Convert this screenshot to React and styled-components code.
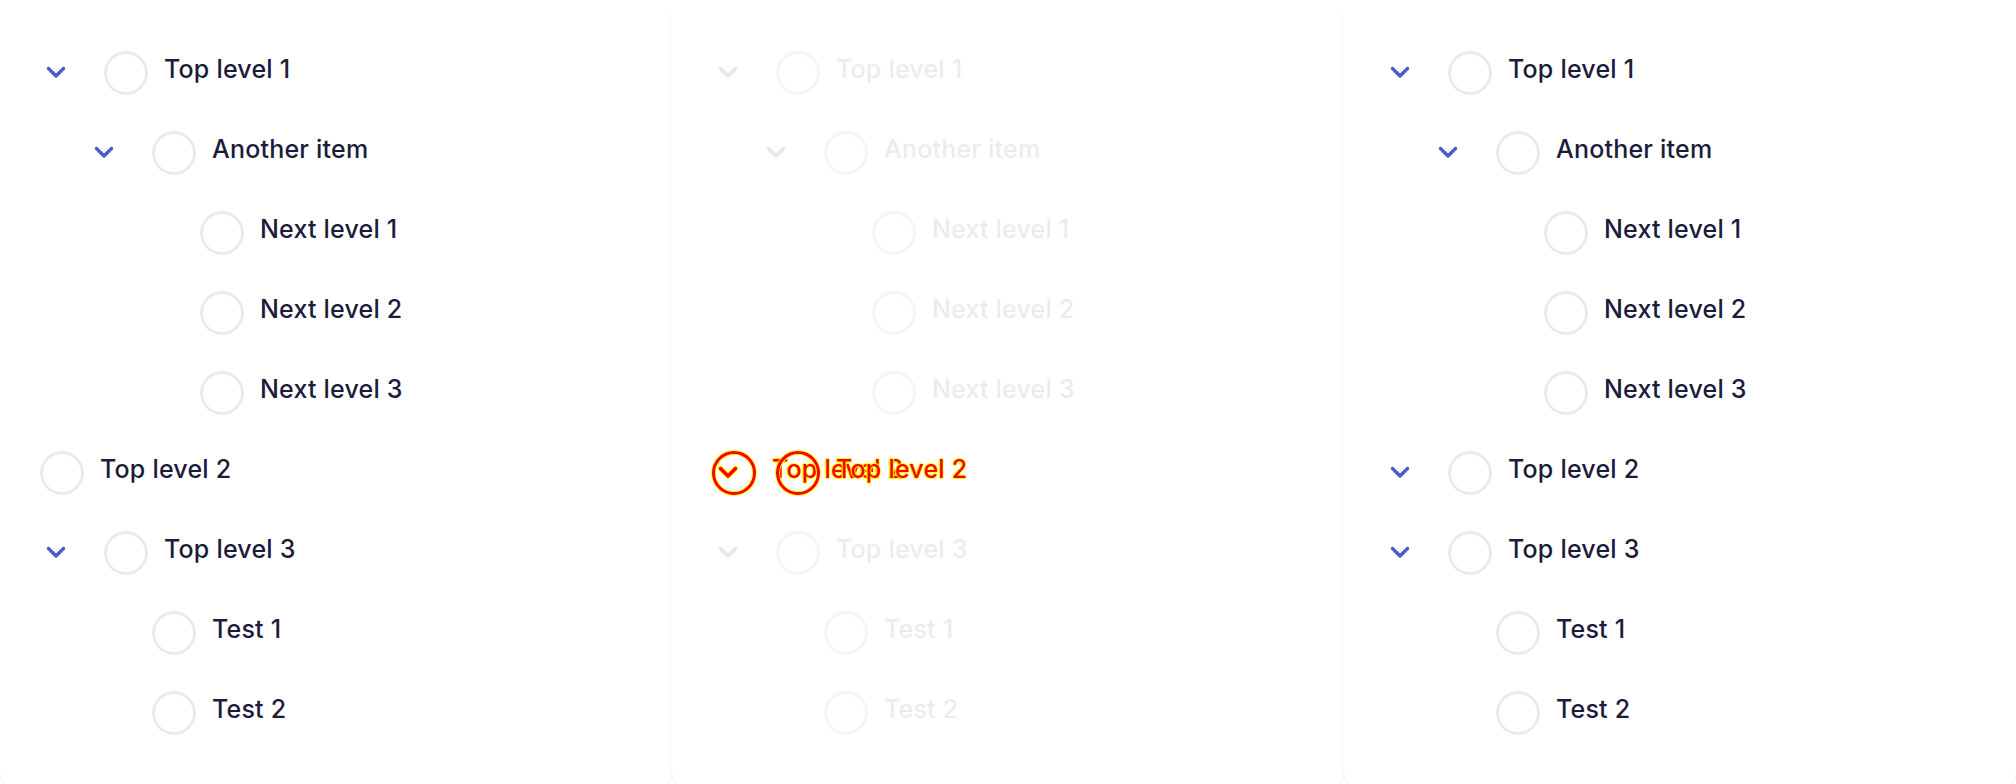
import React from "react";
import styled, { createGlobalStyle, css } from "styled-components";

const GlobalStyle = createGlobalStyle`
  html, body {
    margin: 0;
    padding: 0;
    background: #ffffff;
    overflow: hidden;
  }
  body {
    font-family: Inter, "Noto Sans", sans-serif;
  }
`;

const INK = "#1c1c3a";
const ACCENT = "#4b5cc4";

// diff look: red stroke with a thin yellow fringe
const diffText = css`
  color: #ff0000;
  text-shadow: 1px 0 #ffff00, -1px 0 #ffff00, 0 1px #ffff00, 0 -1px #ffff00;
`;

const Board = styled.div`
  display: grid;
  grid-template-columns: repeat(3, 672px);
  height: 784px;
`;

const Card = styled.section`
  height: 792px;
  box-sizing: border-box;
  padding: 33px 0 0 40px;
  background: #ffffff;
  border-radius: 0 0 24px 24px;
  box-shadow: 0 5px 6px -3px rgba(20, 20, 60, 0.09);
`;

const List = styled.ul`
  list-style: none;
  margin: 0;
  padding: 0;
`;

const RowWrap = styled.li`
  position: relative;
  height: 80px;
`;

const Row = styled.div`
  display: flex;
  align-items: center;
  height: 80px;
  padding-left: ${(p) => p.$depth * 48}px;
  ${(p) =>
    p.$over &&
    css`
      position: absolute;
      inset: 0;
    `}
`;

const ToggleSlot = styled.span`
  display: flex;
  align-items: center;
  justify-content: center;
  width: 32px;
  height: 32px;
  margin-right: 32px;
  margin-top: -2px;
  color: ${(p) => (p.$ghost ? "#e6e6e9" : ACCENT)};
`;

const Radio = styled.span`
  flex: none;
  width: 44px;
  height: 44px;
  box-sizing: border-box;
  border-radius: 50%;
  border: 3px solid ${(p) => (p.$ghost ? "#f5f5f5" : "#ebebeb")};
  ${(p) =>
    p.$diff &&
    css`
      border-color: #ff0000;
      box-shadow: 0 0 0 1px #ffff00, inset 0 0 0 1px #ffff00;
    `}
`;

const Label = styled.span`
  margin-left: 16px;
  margin-top: -8px;
  font-size: 25px;
  font-weight: 450;
  letter-spacing: 0.2px;
  line-height: 30px;
  white-space: nowrap;
  color: ${(p) => (p.$ghost ? "#ececee" : INK)};
  ${(p) => p.$diff && diffText}
`;

function Chevron({ diff }) {
  return (
    <svg width="24" height="24" viewBox="0 0 24 24" fill="none">
      {diff && (
        <polyline
          points="4.5,8.5 12,16 19.5,8.5"
          stroke="#ffff00"
          strokeWidth="5.5"
          strokeLinecap="round"
          strokeLinejoin="round"
        />
      )}
      <polyline
        points="4.5,8.5 12,16 19.5,8.5"
        stroke={diff ? "#ff0000" : "currentColor"}
        strokeWidth="3.5"
        strokeLinecap="round"
        strokeLinejoin="round"
      />
    </svg>
  );
}

function TreeRow({ item, ghost, diff, over }) {
  return (
    <Row $depth={item.depth} $over={over}>
      {item.toggle !== "none" && (
        <ToggleSlot $ghost={ghost}>
          {item.toggle === "open" && <Chevron diff={diff} />}
        </ToggleSlot>
      )}
      <Radio $ghost={ghost} $diff={diff} />
      <Label $ghost={ghost} $diff={diff}>
        {item.label}
      </Label>
    </Row>
  );
}

const base = [
  { label: "Top level 1", depth: 0, toggle: "open" },
  { label: "Another item", depth: 1, toggle: "open" },
  { label: "Next level 1", depth: 2, toggle: "space" },
  { label: "Next level 2", depth: 2, toggle: "space" },
  { label: "Next level 3", depth: 2, toggle: "space" },
  { label: "Top level 2", depth: 0, toggle: "none" },
  { label: "Top level 3", depth: 0, toggle: "open" },
  { label: "Test 1", depth: 1, toggle: "space" },
  { label: "Test 2", depth: 1, toggle: "space" },
];

const expanded = base.map((it) =>
  it.label === "Top level 2" ? { ...it, toggle: "open" } : it
);

function Tree({ items, ghost, dragged }) {
  return (
    <List>
      {items.map((item) => {
        if (dragged && item.label === dragged) {
          return (
            <RowWrap key={item.label}>
              <TreeRow item={{ ...item, toggle: "none" }} diff />
              <TreeRow item={{ ...item, toggle: "open" }} diff over />
            </RowWrap>
          );
        }
        return (
          <RowWrap key={item.label}>
            <TreeRow item={item} ghost={ghost} />
          </RowWrap>
        );
      })}
    </List>
  );
}

export default function App() {
  return (
    <>
      <GlobalStyle />
      <Board>
        <Card>
          <Tree items={base} />
        </Card>
        <Card>
          <Tree items={expanded} ghost dragged="Top level 2" />
        </Card>
        <Card>
          <Tree items={expanded} />
        </Card>
      </Board>
    </>
  );
}
